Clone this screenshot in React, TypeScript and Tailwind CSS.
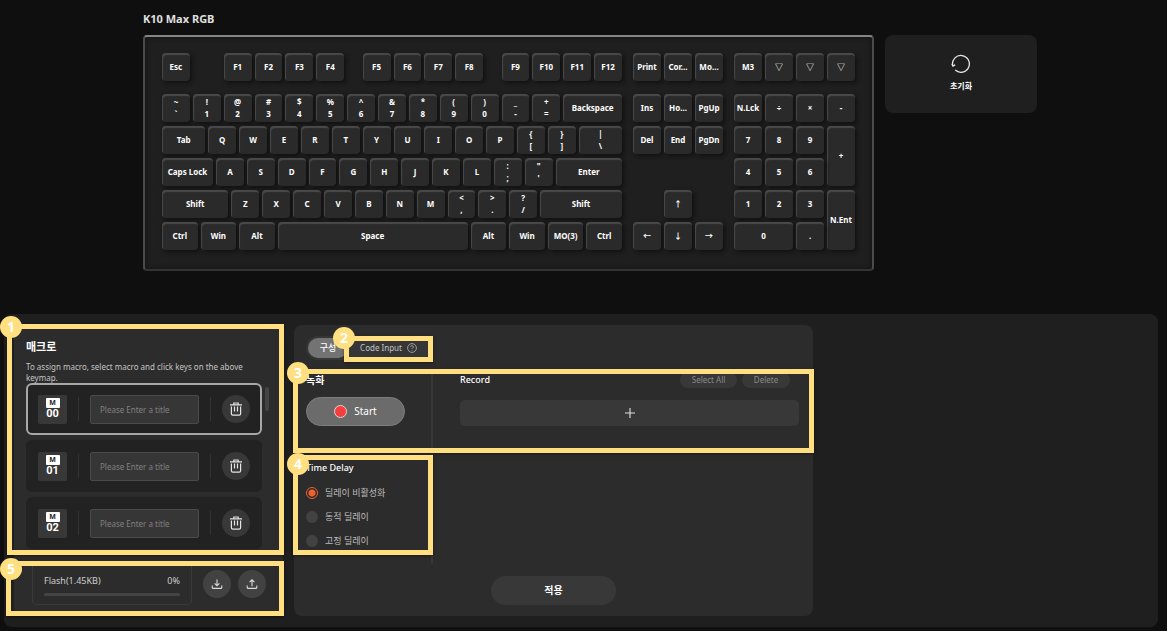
import { useState } from "react";
import clsx from "clsx";

type KeyDef = {
  label?: string;
  top?: string;
  span: string;
  tall?: boolean;
  blank?: boolean;
};

// one unit is four grid columns
const U1 = "col-span-4";
const U125 = "col-span-5";
const U15 = "col-span-6";
const U175 = "col-span-7";
const U2 = "col-span-8";
const U225 = "col-span-9";
const U275 = "col-span-11";
const U625 = "col-span-25";

const key = (label: string, span = U1): KeyDef => ({ label, span });
const dual = (top: string, label: string, span = U1): KeyDef => ({
  top,
  label,
  span,
});
const blank = (span: string): KeyDef => ({ span, blank: true });
const letters = (text: string) => text.split("").map((c) => key(c));

const mainKeys: KeyDef[] = [
  key("Esc"),
  blank("col-span-4"),
  ...["F1", "F2", "F3", "F4"].map((k) => key(k)),
  blank("col-span-2"),
  ...["F5", "F6", "F7", "F8"].map((k) => key(k)),
  blank("col-span-2"),
  ...["F9", "F10", "F11", "F12"].map((k) => key(k)),
  dual("~", "`"),
  dual("!", "1"),
  dual("@", "2"),
  dual("#", "3"),
  dual("$", "4"),
  dual("%", "5"),
  dual("^", "6"),
  dual("&", "7"),
  dual("*", "8"),
  dual("(", "9"),
  dual(")", "0"),
  dual("_", "-"),
  dual("+", "="),
  key("Backspace", U2),
  key("Tab", U15),
  ...letters("QWERTYUIOP"),
  dual("{", "["),
  dual("}", "]"),
  dual("|", "\\", U15),
  key("Caps Lock", U175),
  ...letters("ASDFGHJKL"),
  dual(":", ";"),
  dual("\"", "'"),
  key("Enter", U225),
  key("Shift", U225),
  ...letters("ZXCVBNM"),
  dual("<", ","),
  dual(">", "."),
  dual("?", "/"),
  key("Shift", U275),
  key("Ctrl", U125),
  key("Win", U125),
  key("Alt", U125),
  key("Space", U625),
  key("Alt", U125),
  key("Win", U125),
  key("MO(3)", U125),
  key("Ctrl", U125),
];

const navKeys: KeyDef[] = [
  ...["Print", "Cor...", "Mo...", "Ins", "Ho...", "PgUp"].map((k) => key(k)),
  ...["Del", "End", "PgDn"].map((k) => key(k)),
  blank("col-span-12"),
  blank("col-span-4"),
  key("↑"),
  blank("col-span-4"),
  key("←"),
  key("↓"),
  key("→"),
];

const padKeys: KeyDef[] = [
  ...["M3", "▽", "▽", "▽", "N.Lck", "÷", "×", "-"].map((k) => key(k)),
  ...letters("789"),
  { label: "+", span: U1, tall: true },
  ...letters("456"),
  ...letters("123"),
  { label: "N.Ent", span: U1, tall: true },
  key("0", U2),
  key("."),
];

const macros = ["00", "01", "02"];
const delays = ["딜레이 비활성화", "동적 딜레이", "고정 딜레이"];

const callouts = [
  {
    number: 1,
    frame: "top-[324px] left-[7px] h-[231px] w-[277px]",
    badge: "top-[316px] left-0",
  },
  {
    number: 2,
    frame: "top-[336px] left-[344px] h-[26px] w-[89px]",
    badge: "top-[327px] left-[333px]",
  },
  {
    number: 3,
    frame: "top-[369px] left-[293px] h-[84px] w-[521px]",
    badge: "top-[362px] left-[287px]",
  },
  {
    number: 4,
    frame: "top-[455px] left-[293px] h-[100px] w-[140px]",
    badge: "top-[453px] left-[287px]",
  },
  {
    number: 5,
    frame: "top-[561px] left-[6px] h-[55px] w-[278px]",
    badge: "top-[558px] left-0",
  },
];

function Keycap({ def }: { def: KeyDef }) {
  if (def.blank) return <div className={def.span} />;
  return (
    <div className={clsx(def.span, "pr-[3px]", def.tall && "row-span-2")}>
      <button
        type="button"
        className={clsx(
          "flex w-full flex-col items-center justify-center rounded-[4px] bg-[#2a2a2a] text-[8px] leading-3 font-bold whitespace-nowrap text-white shadow-[inset_1px_2px_1px_#4a4a4a,2px_2px_4px_#111]",
          def.tall ? "h-[60px]" : "h-7"
        )}
      >
        {def.top && <span>{def.top}</span>}
        <span>{def.label}</span>
      </button>
    </div>
  );
}

function KeyBlock({ keys, className }: { keys: KeyDef[]; className: string }) {
  return (
    <div className={clsx("grid grid-rows-[41px_repeat(5,32px)]", className)}>
      {keys.map((def, index) => (
        <Keycap key={`key-${index}`} def={def} />
      ))}
    </div>
  );
}

function TrashIcon() {
  return (
    <svg
      viewBox="0 0 14 14"
      className="size-[14px]"
      fill="none"
      stroke="#e4e4e4"
      strokeWidth="1.2"
    >
      <path d="M1 2.8h12M4.8 2.6V1h4.4v1.6M2.4 4.6v7.2c0 .9.5 1.4 1.4 1.4h6.4c.9 0 1.4-.5 1.4-1.4V4.6M5.5 4.6v5M8.5 4.6v5" />
    </svg>
  );
}

function TransferIcon({ up }: { up?: boolean }) {
  return (
    <svg
      viewBox="0 0 12 12"
      className="size-3"
      fill="none"
      stroke="#dcdcdc"
      strokeWidth="1.1"
    >
      <path d="M1.2 7.4v2c0 .6.4 1 1 1h7.6c.6 0 1-.4 1-1v-2" />
      <path
        d={
          up
            ? "M6 8.2V1.8M3.6 4.2 6 1.8l2.4 2.4"
            : "M6 1.4v6.4M3.6 5.4 6 7.8l2.4-2.4"
        }
      />
    </svg>
  );
}

function MacroRow({
  id,
  selected,
  onSelect,
}: {
  id: string;
  selected: boolean;
  onSelect: () => void;
}) {
  return (
    <li
      onClick={onSelect}
      className={clsx(
        "flex h-[52px] items-center justify-between rounded-md border-2 bg-[#222222] px-[10px]",
        selected ? "border-[#a8a8a8]" : "border-[#222222]"
      )}
    >
      <div className="flex size-[29px] flex-col items-center justify-center rounded-[2px] bg-[#383838] text-white">
        <span className="h-[10px] w-[14px] rounded-[1px] bg-white text-center text-[7px] leading-[10px] font-bold text-[#222222]">
          M
        </span>
        <span className="h-3 font-['Roboto',sans-serif] text-[11px] leading-3 font-bold">
          {id}
        </span>
      </div>
      <div className="h-6 w-px bg-[#333333]" />
      <input
        type="text"
        aria-label={`M${id}`}
        placeholder="Please Enter a title"
        className="h-[29px] w-[109px] rounded-[2px] border border-[#4a4a4a] bg-[#363636] px-[9px] text-[8px] text-white placeholder:text-[#808080]"
      />
      <div className="h-6 w-px bg-[#333333]" />
      <button
        type="button"
        aria-label="Delete macro"
        className="flex size-7 items-center justify-center rounded-full bg-[#383838]"
      >
        <TrashIcon />
      </button>
    </li>
  );
}

export default function App() {
  const [selected, setSelected] = useState("00");
  const [delay, setDelay] = useState(delays[0]);

  return (
    <div className="relative min-h-screen bg-[#0f0f0f] pb-1 font-['Noto_Sans','Noto_Sans_CJK_KR',sans-serif] text-white">
      <header className="flex h-[314px] items-start gap-[11px] pt-[11px] pl-[143px]">
        <section>
          <h1 className="text-[11px] leading-4 font-bold text-[#e0e0e0]">
            K10 Max RGB
          </h1>
          <div className="mt-2 flex w-[731px] gap-2 rounded-[4px] border-2 border-[#4b4b4b] border-t-[#858585] border-b-[#333333] bg-[#1f1f1f] pt-4 pr-[14px] pb-[15px] pl-[17px] shadow-[inset_0_0_5px_#111]">
            <KeyBlock
              keys={mainKeys}
              className="grow grid-cols-[repeat(60,minmax(0,1fr))]"
            />
            <KeyBlock
              keys={navKeys}
              className="w-[93px] grid-cols-[repeat(12,minmax(0,1fr))]"
            />
            <KeyBlock
              keys={padKeys}
              className="w-[124px] grid-cols-[repeat(16,minmax(0,1fr))]"
            />
          </div>
        </section>
        <button
          type="button"
          className="mt-6 flex h-[78px] w-[152px] flex-col items-center justify-center gap-1 rounded-lg bg-[#1f1f1f] text-[8px] leading-4 font-bold"
        >
          <svg
            viewBox="0 0 20 20"
            className="size-5"
            fill="none"
            stroke="#e6e6e6"
            strokeWidth="1.3"
          >
            <path d="M4.2 16A8.4 8.4 0 1 0 1.7 11.5" />
            <path d="M.9 9.8 1.9 12l2.3-1.2" />
          </svg>
          초기화
        </button>
      </header>

      <main className="mr-[9px] ml-1 flex h-[313px] gap-[11px] rounded-lg bg-[#1f1f1f] pt-[11px] pb-[11px] pl-[10px]">
        <section className="flex w-[269px] flex-col rounded-lg bg-[#2c2c2c] pt-3 pl-3">
          <h2 className="text-[11px] leading-5 font-bold">매크로</h2>
          <p className="mt-1 w-[236px] text-[8px] leading-[11px] text-[#c4c4c4]">
            To assign macro, select macro and click keys on the above keymap.
          </p>
          <div className="flex h-[167px] gap-[3px] overflow-hidden">
            <ul className="flex w-[236px] shrink-0 flex-col gap-[5px]">
              {macros.map((id) => (
                <MacroRow
                  key={id}
                  id={id}
                  selected={selected === id}
                  onSelect={() => setSelected(id)}
                />
              ))}
            </ul>
            <div className="mt-1 h-6 w-1 rounded-full bg-[#444444]" />
          </div>
          <div className="mt-3 flex items-center pl-[6px]">
            <div className="h-[43px] w-[160px] rounded-[4px] border border-[#3a3a3a] px-[11px] pt-[10px]">
              <div className="flex justify-between text-[9px] leading-4 text-[#cfcfcf]">
                <span>Flash(1.45KB)</span>
                <span>0%</span>
              </div>
              <div className="mt-1 h-[3px] rounded-full bg-[#444444]" />
            </div>
            <button
              type="button"
              aria-label="Import"
              className="ml-[11px] flex size-7 items-center justify-center rounded-full bg-[#424242]"
            >
              <TransferIcon />
            </button>
            <button
              type="button"
              aria-label="Export"
              className="ml-[7px] flex size-7 items-center justify-center rounded-full bg-[#424242]"
            >
              <TransferIcon up />
            </button>
          </div>
        </section>

        <section className="flex w-[519px] flex-col rounded-lg bg-[#2c2c2c] pt-[11px] pb-[11px] pl-3">
          <div className="flex h-6 w-[125px] rounded-full bg-[#363636] p-[2px]">
            <button
              type="button"
              className="w-10 rounded-full bg-[#737373] text-[9px] font-medium"
            >
              구성
            </button>
            <button
              type="button"
              className="flex grow items-center justify-center gap-[5px] text-[8px] text-[#c4c4c4]"
            >
              Code Input
              <svg
                viewBox="0 0 10 10"
                className="size-[10px]"
                fill="none"
                stroke="#b5b5b5"
                strokeWidth=".8"
              >
                <circle cx="5" cy="5" r="4.4" />
                <path d="M3.7 4a1.3 1.3 0 1 1 1.9 1.1c-.4.2-.6.5-.6.9M5 6.9v.8" />
              </svg>
            </button>
          </div>

          <div className="mt-3 flex h-[192px]">
            <div className="w-[127px] border-r-2 border-[#373737]">
              <h3 className="text-[10px] leading-4 font-semibold">녹화</h3>
              <button
                type="button"
                className="mt-[9px] flex h-[29px] w-[99px] items-center justify-center gap-[7px] rounded-full border border-[#7d7d7d] bg-[#6b6b6b] text-[10px]"
              >
                <span className="size-[13px] rounded-full border border-[#d8d8d8] bg-[#f53e3e]" />
                Start
              </button>
              <h3 className="mt-[34px] text-[9px] leading-4 font-medium">
                Time Delay
              </h3>
              <div className="mt-[9px] flex flex-col gap-2">
                {delays.map((name) => (
                  <label
                    key={name}
                    className="flex h-4 items-center gap-[7px] text-[9px] text-[#bdbdbd]"
                  >
                    <input
                      type="radio"
                      name="delay"
                      checked={delay === name}
                      onChange={() => setDelay(name)}
                      className="size-3 appearance-none rounded-full bg-[#424242] checked:border checked:border-[#f0622d] checked:bg-[#2c2c2c] checked:bg-[radial-gradient(circle,#f0622d_0_3px,transparent_4px)]"
                    />
                    {name}
                  </label>
                ))}
              </div>
            </div>
            <div className="grow pr-[14px] pl-[27px]">
              <div className="flex items-center gap-[5px] pr-[9px]">
                <h3 className="grow text-[9px] leading-4 font-medium">
                  Record
                </h3>
                <button
                  type="button"
                  className="h-4 w-[57px] rounded-full bg-[#383838] text-[8px] leading-4 text-[#8a8a8a]"
                >
                  Select All
                </button>
                <button
                  type="button"
                  className="h-4 w-12 rounded-full bg-[#383838] text-[8px] leading-4 text-[#8a8a8a]"
                >
                  Delete
                </button>
              </div>
              <button
                type="button"
                aria-label="Add"
                className="mt-3 flex h-[26px] w-full items-center justify-center rounded-[5px] bg-[#383838]"
              >
                <svg
                  viewBox="0 0 10 10"
                  className="size-[10px]"
                  stroke="#e0e0e0"
                  strokeWidth="1.1"
                >
                  <path d="M5 0v10M0 5h10" />
                </svg>
              </button>
            </div>
          </div>
          <button
            type="button"
            className="mt-3 mr-3 h-[29px] w-[125px] shrink-0 self-center rounded-full bg-[#383838] text-[10px] font-bold"
          >
            적용
          </button>
        </section>
      </main>

      {callouts.map(({ number, frame, badge }) => (
        <div key={number} className="pointer-events-none">
          <div
            className={clsx(
              "absolute border-[5px] border-[#ffdf7f] shadow-[0_1px_3px_#00000066]",
              frame
            )}
          />
          <span
            className={clsx(
              "absolute flex size-[22px] items-center justify-center rounded-full bg-[#ffdf7f] font-['Open_Sans',sans-serif] text-[14px] leading-none font-bold text-white",
              badge
            )}
          >
            {number}
          </span>
        </div>
      ))}
    </div>
  );
}
